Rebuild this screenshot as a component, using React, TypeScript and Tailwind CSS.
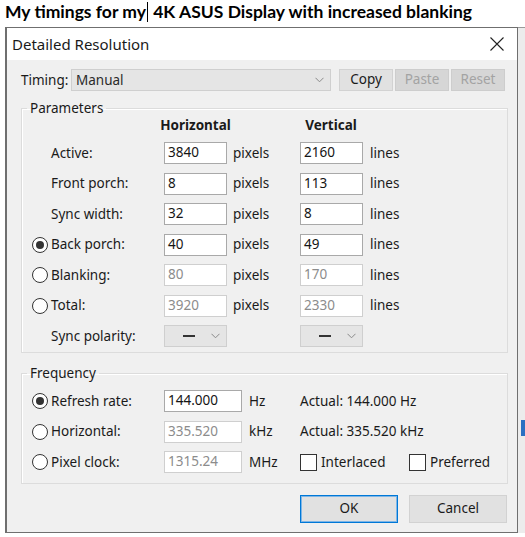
import React from 'react'

const Chevron = () => (
  <svg width="9" height="6" viewBox="0 0 9 6">
    <path d="M0.5 0.8 L4.5 4.8 L8.5 0.8" stroke="#8a8a8a" strokeWidth="1" fill="none" />
  </svg>
)

const Radio: React.FC<{ on?: boolean }> = ({ on }) => (
  <span className="flex h-[16px] w-[16px] items-center justify-center rounded-full border border-[#333333] bg-white">
    {on && <span className="h-[8px] w-[8px] rounded-full bg-[#333333]" />}
  </span>
)

const Box: React.FC<{ value: string; disabled?: boolean; wide?: boolean }> = ({ value, disabled, wide }) => (
  <div
    className={`flex h-[22px] items-center border bg-white pl-[3px] leading-none ${wide ? 'w-[78px]' : 'w-[63px]'} ${
      disabled ? 'border-[#cfcfcf] text-[#8c8c8c]' : 'border-[#a9a9a9] text-[#151515]'
    }`}
  >
    {value}
  </div>
)

const Combo: React.FC = () => (
  <div className="flex h-[22px] w-[63px] items-center justify-between border border-[#cfcfcf] bg-[#e5e5e5] pl-[18px] pr-[6px]">
    <span className="h-[2px] w-[12px] bg-[#333333]" />
    <Chevron />
  </div>
)

const params = [
  { radio: 0, label: 'Active:', h: '3840', v: '2160' },
  { radio: 0, label: 'Front porch:', h: '8', v: '113' },
  { radio: 0, label: 'Sync width:', h: '32', v: '8' },
  { radio: 2, label: 'Back porch:', h: '40', v: '49' },
  { radio: 1, label: 'Blanking:', h: '80', v: '170', off: true },
  { radio: 1, label: 'Total:', h: '3920', v: '2330', off: true },
]

const freqs = [
  { on: true, label: 'Refresh rate:', value: '144.000', unit: 'Hz', actual: 'Actual: 144.000 Hz' },
  { on: false, label: 'Horizontal:', value: '335.520', unit: 'kHz', actual: 'Actual: 335.520 kHz' },
  { on: false, label: 'Pixel clock:', value: '1315.24', unit: 'MHz', actual: '' },
]

export default function App() {
  return (
    <div className="h-[537px] w-[525px] overflow-hidden bg-white font-['Noto_Sans',sans-serif] text-[13.5px] text-[#1a1a1a]">
      {/* Heading with text cursor */}
      <div className="h-[27px] whitespace-nowrap pl-[5px] font-['Lato',sans-serif] text-[17.5px] font-bold leading-[23px] text-black">
        My timings for my
        <span className="mx-px inline-block h-[20px] w-px bg-black align-[-4px]" /> 4K ASUS Display with increased blanking
      </div>

      <div className="flex">
        <div className="w-[5px]" />

        {/* Dialog */}
        <div className="flex h-[506px] w-[513px] flex-col border border-l-2 border-[#6f6f6f] bg-[#f0f0f0]">
          <div className="flex h-[32px] items-center justify-between bg-white pl-[5px] pr-[13px]">
            <span className="text-[15px] text-[#1a1a1a]">Detailed Resolution</span>
            <svg width="14" height="14" viewBox="0 0 14 14">
              <path d="M0.5 0.5 L13.5 13.5 M13.5 0.5 L0.5 13.5" stroke="#222222" strokeWidth="1.1" />
            </svg>
          </div>

          <div className="flex flex-1 flex-col pl-[14px] pt-[9px]">
            {/* Timing row */}
            <div className="flex h-[22px] items-center">
              <span className="w-[50px]">Timing:</span>
              <div className="flex h-[22px] w-[260px] items-center justify-between border border-[#cfcfcf] bg-[#e5e5e5] pl-[4px] pr-[6px]">
                <span className="text-[#2a2a2a]">Manual</span>
                <Chevron />
              </div>
              <button className="ml-[8px] h-[22px] w-[54px] border border-[#d2d2d2] bg-[#e1e1e1] leading-none text-[#1a1a1a]">
                Copy
              </button>
              <button className="ml-[2px] h-[22px] w-[54px] border border-[#cdcdcd] bg-[#d6d6d6] leading-none text-[#a3a3a3]">
                Paste
              </button>
              <button className="ml-[2px] h-[22px] w-[54px] border border-[#cdcdcd] bg-[#d6d6d6] leading-none text-[#a3a3a3]">
                Reset
              </button>
            </div>

            {/* Parameters */}
            <fieldset className="mt-[9px] w-[487px] border border-[#dcdcdc] pb-[5px] shadow-[inset_1px_1px_0_#ffffff]">
              <legend className="ml-[5px] px-[3px] leading-[16px]">Parameters</legend>
              <div className="mt-[2px] flex h-[16px] items-center pl-[10px] font-bold leading-none">
                <span className="w-[132px]" />
                <span className="flex w-[63px] justify-center whitespace-nowrap">Horizontal</span>
                <span className="w-[73px]" />
                <span className="flex w-[62px] justify-center whitespace-nowrap">Vertical</span>
              </div>
              <div className="mt-[8px] flex flex-col gap-[8.5px] pl-[10px]">
                {params.map((p) => (
                  <div key={p.label} className="flex h-[22px] items-center">
                    <span className="w-[19px]">{p.radio > 0 && <Radio on={p.radio === 2} />}</span>
                    <span className="w-[113px]">{p.label}</span>
                    <Box value={p.h} disabled={p.off} />
                    <span className="w-[73px] pl-[6px]">pixels</span>
                    <Box value={p.v} disabled={p.off} />
                    <span className="pl-[7px]">lines</span>
                  </div>
                ))}
                <div className="flex h-[22px] items-center">
                  <span className="w-[19px]" />
                  <span className="w-[113px]">Sync polarity:</span>
                  <Combo />
                  <span className="w-[73px]" />
                  <Combo />
                </div>
              </div>
            </fieldset>

            {/* Frequency */}
            <fieldset className="mt-[12px] w-[487px] border border-[#dcdcdc] pb-[10px] shadow-[inset_1px_1px_0_#ffffff]">
              <legend className="ml-[5px] px-[3px] leading-[16px]">Frequency</legend>
              <div className="mt-[9px] flex flex-col gap-[8.5px] pl-[10px]">
                {freqs.map((f) => (
                  <div key={f.label} className="flex h-[22px] items-center">
                    <span className="w-[19px]">
                      <Radio on={f.on} />
                    </span>
                    <span className="w-[113px]">{f.label}</span>
                    <Box value={f.value} disabled={!f.on} wide />
                    <span className="w-[58px] pl-[7px]">{f.unit}</span>
                    {f.actual ? (
                      <span>{f.actual}</span>
                    ) : (
                      <div className="flex items-center">
                        <span className="flex w-[109px] items-center">
                          <span className="h-[17px] w-[17px] border border-[#333333] bg-white" />
                          <span className="pl-[4px]">Interlaced</span>
                        </span>
                        <span className="h-[17px] w-[17px] border border-[#333333] bg-white" />
                        <span className="pl-[4px]">Preferred</span>
                      </div>
                    )}
                  </div>
                ))}
              </div>
            </fieldset>

            {/* Buttons */}
            <div className="mt-[11px] flex w-[486px] justify-end gap-[11px]">
              <button className="h-[28px] w-[98px] border border-[#0078d7] bg-[#e1e1e1] leading-none text-[#1a1a1a] shadow-[inset_0_0_0_1px_#7fb6e6]">
                OK
              </button>
              <button className="h-[28px] w-[98px] border border-[#d2d2d2] bg-[#e1e1e1] leading-none text-[#1a1a1a]">
                Cancel
              </button>
            </div>
          </div>
        </div>

        {/* Window behind */}
        <div className="flex h-[506px] flex-1 flex-col border-t border-[#9a9a9a] bg-[#ececec]">
          <div className="mt-[392px] ml-[3px] h-[16px] flex-none bg-[#2a6fc2]" />
        </div>
      </div>
    </div>
  )
}
